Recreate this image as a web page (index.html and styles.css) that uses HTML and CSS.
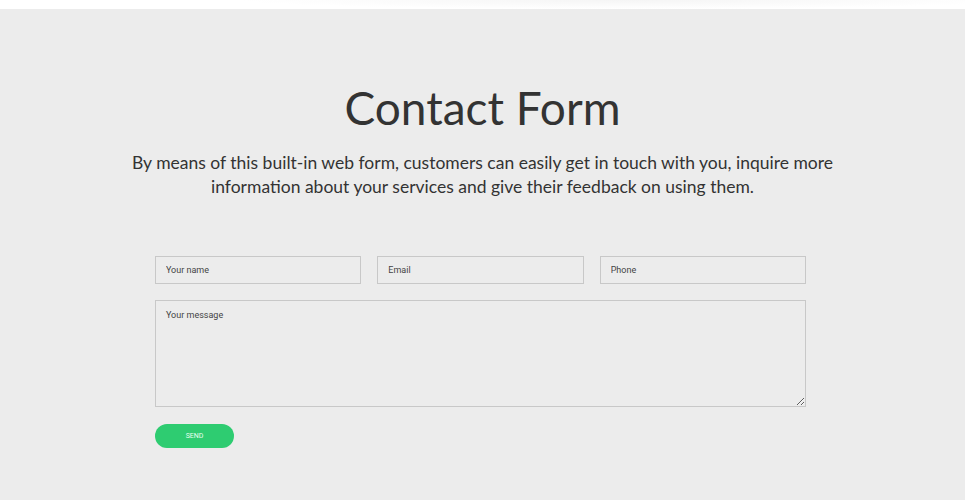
FILE: index.html
```html
<!DOCTYPE html>
<html>
<head>
<meta charset="utf-8">
<link rel="stylesheet" href="styles.css">
</head>
<body>
<div class="topbar"></div>
<section class="contact">
  <h1 class="title">Contact Form</h1>
  <p class="lead">By means of this built-in web form, customers can easily get in touch with you, inquire more information about your services and give their feedback on using them.</p>
  <form class="form">
    <div class="row">
      <input class="field" type="text" placeholder="Your name">
      <input class="field" type="text" placeholder="Email">
      <input class="field" type="text" placeholder="Phone">
    </div>
    <textarea class="message" placeholder="Your message"></textarea>
    <button class="send" type="button">SEND</button>
  </form>
</section>
</body>
</html>
```
FILE: styles.css
```css
html, body { margin: 0; padding: 0; }
body { background: #ececec; font-family: Lato, sans-serif; color: #333; }
.topbar {
  height: 9px;
  background: radial-gradient(ellipse 40% 100% at 65% 0%, #f5f5f5 0%, #fff 100%);
}
.contact { padding: 73px 0 40px; display: flex; flex-direction: column; align-items: center; }
.title { margin: 0; font-weight: 400; font-size: 46px; line-height: 52px; color: #333; }
.lead { margin: 17px 0 0; width: 740px; text-align: center; font-size: 17.5px; line-height: 24px; color: #333; }
.form { margin: 57px 4px 0 0; width: 651px; display: flex; flex-direction: column; }
.row { display: flex; gap: 16px; }
.field, .message {
  box-sizing: border-box; background: #ececec; border: 1px solid #c8c8c8; border-radius: 0;
  font-family: Roboto, sans-serif; font-size: 9px; color: #444; padding: 0 10px; outline: none;
}
.field { flex: 1; height: 28px; }
.field::placeholder, .message::placeholder { color: #444; opacity: 1; }
.message { margin-top: 16px; height: 107px; padding-top: 9px; resize: vertical; }
.send {
  margin-top: 17px; width: 79px; height: 24px; border: none; border-radius: 12px; flex: none;
  background: #2ecc71; color: #e8fff0; font-family: Roboto, sans-serif; font-size: 7px; font-weight: 400; cursor: pointer; padding: 0;
}
```
